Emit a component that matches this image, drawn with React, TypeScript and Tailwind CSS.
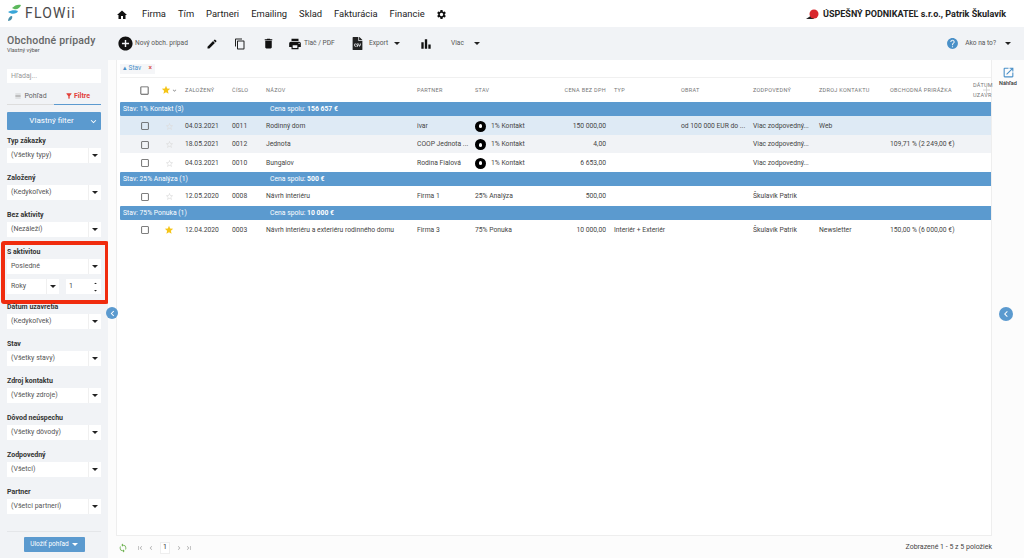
import React from "react";
import { MdHome, MdSettings, MdAddCircle, MdEdit, MdContentCopy, MdDelete, MdPrint, MdBarChart, MdHelp, MdStar, MdStarBorder, MdChevronLeft, MdSync, MdFirstPage, MdLastPage, MdNavigateBefore, MdNavigateNext, MdFilterAlt, MdViewHeadline, MdKeyboardArrowDown, MdArrowDropDown, MdArrowDropUp, MdOpenInNew, MdCheckBoxOutlineBlank } from "react-icons/md";
import { FaFileCsv } from "react-icons/fa";

const Caret = ({ className = "" }: { className?: string }) => (
  <span className={`inline-block w-0 h-0 border-x-[3px] border-x-transparent border-t-[3px] border-t-[#222] ${className}`} />
);

function Select({ text, className = "" }: { text: string; className?: string }) {
  return (
    <div className={`flex h-[15px] shrink-0 bg-white ${className}`}>
      <div className="flex-1 flex items-center pl-[4px] text-[7px] text-[#555] truncate">{text}</div>
      <div className="w-[13px] flex items-center justify-center border-l border-[#f0f0f0]"><Caret /></div>
    </div>
  );
}

function Field({ label, value, compact }: { label: string; value: string; compact?: boolean }) {
  return (
    <div className="flex flex-col shrink-0">
      <div className={`${compact ? "h-[10px]" : "h-[22px]"} flex items-end pb-[2px] text-[7px] leading-[9px] font-bold text-[#333]`}>{label}</div>
      <Select text={value} />
    </div>
  );
}

const cols = {
  check: "w-[25px] flex justify-center",
  star: "w-[28px] flex justify-center pr-[4px]",
  date: "w-[47px]",
  num: "w-[34px]",
  name: "w-[151px]",
  partner: "w-[58px]",
  stav: "w-[70px]",
  cena: "w-[61px] text-right",
  typ: "w-[75px] pl-[8px]",
  obrat: "w-[72px]",
  zodp: "w-[66px]",
  zdroj: "w-[71px]",
  prir: "w-[83px]",
  dat: "w-[18px]",
};

type R = { d: string; n: string; name: string; p: string; st: string; icon?: boolean; c: string; t?: string; o?: string; z: string; zk?: string; pr?: string; fav?: boolean; bg: string; h: string };

function Row({ r }: { r: R }) {
  return (
    <div className={`flex items-center text-[6.75px] text-[#444] pl-[12px] pt-[1px] ${r.h} ${r.bg}`}>
      <div className={cols.check}><MdCheckBoxOutlineBlank className="text-[10px] text-[#555]" /></div>
      <div className={cols.star}>
        {r.fav ? <MdStar className="text-[10px] text-[#f5c518]" /> : <MdStarBorder className="text-[9px] text-[#ddd]" />}
      </div>
      <div className={cols.date}>{r.d}</div>
      <div className={cols.num}>{r.n}</div>
      <div className={cols.name}>{r.name}</div>
      <div className={`${cols.partner} truncate pr-[2px]`}>{r.p}</div>
      <div className={`${cols.stav} flex items-center gap-[5px]`}>
        {r.icon && <span className="w-[11px] h-[11px] rounded-full bg-black flex items-center justify-center"><span className="w-[3px] h-[4px] rounded-sm bg-white" /></span>}
        <span>{r.st}</span>
      </div>
      <div className={cols.cena}>{r.c}</div>
      <div className={cols.typ}>{r.t}</div>
      <div className={`${cols.obrat} whitespace-nowrap`}>{r.o}</div>
      <div className={cols.zodp}>{r.z}</div>
      <div className={cols.zdroj}>{r.zk}</div>
      <div className={`${cols.prir} whitespace-nowrap`}>{r.pr}</div>
    </div>
  );
}

function Group({ a, b }: { a: string; b: string }) {
  return (
    <div className="h-[14px] flex items-center bg-[#5b9acf] text-white text-[6.8px] rounded-l-[1px] pl-[3px] pt-[1px]">
      <div className="w-[147px]">{a}</div>
      <div>Cena spolu: <b>{b}</b></div>
    </div>
  );
}

const Th = ({ className, children }: { className: string; children?: React.ReactNode }) => (
  <div className={`${className} text-[5.5px] tracking-[0.3px] text-[#777] whitespace-nowrap`}>{children}</div>
);

export default function App() {
  return (
    <div className="relative w-[1024px] h-[558px] flex flex-col bg-white overflow-hidden font-['Roboto',sans-serif]">
      <header className="h-[27px] flex items-center bg-white shrink-0 pt-[2px]">
        <div className="w-[116px] flex items-center pl-[7px] gap-[3px] -mt-[3px]">
          <svg width="15" height="18" viewBox="0 0 15 18">
            <path d="M5 4 C8 1 11 0 14 1 C13 4 10 6 7 5 Z" fill="#5cb85c" />
            <path d="M1 8 C4 6 9 6 11 7 C10 10 5 11 1 8 Z" fill="#3aa6d8" />
            <path d="M1 17 C1 14 3 12 5 12 C6 14 4 17 1 17 Z" fill="#4a8fa8" />
          </svg>
          <span className="text-[14px] leading-none tracking-[1.2px] text-[#4a4a4a]">FLOWii</span>
        </div>
        <MdHome className="text-[12px] text-[#111]" />
        <nav className="flex items-center text-[9.4px] text-[#222] ml-[14px] gap-[12px]">
          <span>Firma</span><span>Tím</span><span>Partneri</span><span>Emailing</span><span>Sklad</span><span>Fakturácia</span><span>Financie</span>
        </nav>
        <MdSettings className="text-[11px] text-[#111] ml-[11px]" />
        <div className="ml-auto flex items-center gap-[3px] pr-[18px]">
          <svg width="14" height="11" viewBox="0 0 14 11">
            <path d="M0 10 L6 6 L8 10 Z" fill="#222" />
            <circle cx="8" cy="5" r="4.5" fill="#d8262c" />
          </svg>
          <span className="text-[9px] font-bold text-[#222]">ÚSPEŠNÝ PODNIKATEĽ s.r.o., Patrik Škulavík</span>
        </div>
      </header>

      <div className="h-[33px] shrink-0 flex items-center bg-[#f1f3f6] text-[#555]">
        <div className="w-[117px] pl-[7px]">
          <div className="text-[10.5px] leading-[12px] font-medium tracking-[0.2px] text-[#666]">Obchodné prípady</div>
          <div className="text-[5.5px] leading-[6px] text-[#555]">Vlastný výber</div>
        </div>
        <MdAddCircle className="text-[17px] text-[#111]" />
        <span className="text-[6.6px] ml-[1px] w-[71px]">Nový obch. prípad</span>
        <MdEdit className="text-[12px] text-[#111]" />
        <MdContentCopy className="text-[12px] text-[#222] ml-[16px]" />
        <MdDelete className="text-[13px] text-[#111] ml-[16px]" />
        <MdPrint className="text-[14px] text-[#111] ml-[13px]" />
        <span className="text-[6.6px] ml-[2px] w-[47px]">Tlač / PDF</span>
        <FaFileCsv className="text-[13px] text-[#222]" />
        <span className="text-[6.6px] ml-[5px]">Export</span>
        <Caret className="ml-[6px]" />
        <MdBarChart className="text-[14px] text-[#111] ml-[19px]" />
        <span className="text-[6.6px] ml-[18px]">Viac</span>
        <Caret className="ml-[10px]" />
        <div className="ml-auto flex items-center pr-[13px]">
          <MdHelp className="text-[13px] text-[#4a90c8]" />
          <span className="text-[6.6px] ml-[6px]">Ako na to?</span>
          <Caret className="ml-[9px]" />
        </div>
      </div>

      <div className="flex-1 flex min-h-0">
        <aside className="w-[108px] shrink-0 bg-[#f1f3f6] px-[7px] flex flex-col">
          <div className="mt-[9px] h-[14px] shrink-0 bg-white flex items-center pl-[4px] text-[7px] text-[#999]">Hľadaj...</div>
          <div className="mt-[5px] h-[17px] shrink-0 flex text-[7px]">
            <div className="flex-1 flex items-center justify-center gap-[2px] text-[#666] border-b border-[#ddd]"><MdViewHeadline className="text-[8px] text-[#aaa]" />Pohľad</div>
            <div className="flex-1 flex items-center justify-center gap-[1px] font-bold text-[#e2403a] border-b border-[#5b9acf]"><MdFilterAlt className="text-[8px]" />Filtre</div>
          </div>
          <div className="mt-[7px] h-[18px] shrink-0 bg-[#5b9acf] text-white text-[8px] flex items-center rounded-[1px]">
            <span className="flex-1 text-center pl-[8px]">Vlastný filter</span>
            <MdKeyboardArrowDown className="text-[11px] mr-[2px]" />
          </div>
          <div className="-mt-[4px]">
            <Field label="Typ zákazky" value="(Všetky typy)" />
            <Field label="Založený" value="(Kedykoľvek)" />
            <Field label="Bez aktivity" value="(Nezáleží)" />
          </div>
          <div className="-ml-[6px] -mr-[8px] h-[63px] shrink-0 mt-[4px] border-[4px] border-[#f02c0e] rounded-[3px] pl-[2px] pr-[4px]">
            <div className="h-[14px] pt-[3px] text-[7px] leading-[9px] font-bold text-[#333]">S aktivitou</div>
            <Select text="Posledné" />
            <div className="flex justify-between mt-[5px]">
              <Select text="Roky" className="w-[52px]" />
              <div className="w-[35px] h-[15px] bg-white flex items-center justify-between pl-[3px] pr-[2px] text-[7px] text-[#444]">
                <span>1</span>
                <span className="flex flex-col gap-[2px]"><MdArrowDropUp className="text-[7px] -my-[1px] text-[#222]" /><MdArrowDropDown className="text-[7px] -my-[1px] text-[#222]" /></span>
              </div>
            </div>
          </div>
          <Field compact label="Dátum uzavretia" value="(Kedykoľvek)" />
          <Field label="Stav" value="(Všetky stavy)" />
          <Field label="Zdroj kontaktu" value="(Všetky zdroje)" />
          <Field label="Dôvod neúspechu" value="(Všetky dôvody)" />
          <Field label="Zodpovedný" value="(Všetci)" />
          <Field label="Partner" value="(Všetci partneri)" />
          <div className="mt-[17px] border-t border-[#e4e6e9] pt-[5px] flex justify-center shrink-0">
            <div className="h-[15px] w-[61px] bg-[#5b9acf] text-white text-[6.5px] flex items-center justify-center gap-[3px] rounded-[1px]">
              Uložiť pohľad <Caret className="border-t-white" />
            </div>
          </div>
        </aside>

        <main className="flex-1 flex flex-col min-w-0 bg-[#fcfcfc]">
          <div className="flex-1 flex min-h-0">
            <div className="ml-[8px] w-[876px] border border-[#eeeeee] border-t-0 bg-white flex flex-col pl-[3px]">
              <div className="h-[17px] flex items-center shrink-0 pt-[1px]">
                <div className="h-[10px] px-[3px] w-[35px] bg-[#f5f6f8] text-[6.5px] text-[#4a90c8] flex items-center justify-between">
                  <span>▴ Stav</span><span className="text-[#d9534f] font-bold">×</span>
                </div>
              </div>
              <div className="relative h-[25px] flex items-center border-t border-[#f0f0f0] pl-[12px] shrink-0">
                <div className={cols.check}><MdCheckBoxOutlineBlank className="text-[11px] text-[#555]" /></div>
                <div className={`${cols.star} items-center`}><MdStar className="text-[10px] text-[#f5c518]" /><MdKeyboardArrowDown className="text-[7px] text-[#888]" /></div>
                <Th className={cols.date}>ZALOŽENÝ</Th>
                <Th className={cols.num}>ČÍSLO</Th>
                <Th className={cols.name}>NÁZOV</Th>
                <Th className={cols.partner}>PARTNER</Th>
                <Th className={cols.stav}>STAV</Th>
                <Th className={cols.cena}>CENA BEZ DPH</Th>
                <Th className={cols.typ}>TYP</Th>
                <Th className={cols.obrat}>OBRAT</Th>
                <Th className={cols.zodp}>ZODPOVEDNÝ</Th>
                <Th className={cols.zdroj}>ZDROJ KONTAKTU</Th>
                <Th className={cols.prir}>OBCHODNÁ PRIRÁŽKA</Th>
                <Th className={`${cols.dat} leading-[10px]`}>DÁTUM<br />UZAVR</Th>
                <svg className="absolute right-[1px] top-[8px]" width="7" height="8" viewBox="0 0 7 8"><path d="M3.5 0V8M0 4H7" stroke="#ccc" strokeWidth="0.8" /></svg>
              </div>
              <Group a="Stav: 1% Kontakt (3)" b="156 657 €" />
              <Row r={{ d: "04.03.2021", n: "0011", name: "Rodinný dom", p: "ivar", st: "1% Kontakt", icon: true, c: "150 000,00", o: "od 100 000 EUR do ...", z: "Viac zodpovedný...", zk: "Web", bg: "bg-[#deeaf5]", h: "h-[19px]" }} />
              <Row r={{ d: "18.05.2021", n: "0012", name: "Jednota", p: "COOP Jednota ...", st: "1% Kontakt", icon: true, c: "4,00", z: "Viac zodpovedný...", pr: "109,71 % (2 249,00 €)", bg: "bg-[#f1f3f6]", h: "h-[18px]" }} />
              <Row r={{ d: "04.03.2021", n: "0010", name: "Bungalov", p: "Rodina Fialová", st: "1% Kontakt", icon: true, c: "6 653,00", z: "Viac zodpovedný...", bg: "bg-white", h: "h-[19px]" }} />
              <Group a="Stav: 25% Analýza (1)" b="500 €" />
              <Row r={{ d: "12.05.2020", n: "0008", name: "Návrh interiéru", p: "Firma 1", st: "25% Analýza", c: "500,00", z: "Škulavík Patrik", bg: "bg-white", h: "h-[20px]" }} />
              <Group a="Stav: 75% Ponuka (1)" b="10 000 €" />
              <Row r={{ d: "12.04.2020", n: "0003", name: "Návrh interiéru a exteriéru rodinného domu", p: "Firma 3", st: "75% Ponuka", c: "10 000,00", t: "Interiér + Exteriér", z: "Škulavík Patrik", zk: "Newsletter", pr: "150,00 % (6 000,00 €)", fav: true, bg: "bg-white", h: "h-[19px]" }} />
            </div>
            <div className="flex-1 flex flex-col items-center pt-[6px]">
              <MdOpenInNew className="text-[13px] text-[#4a90c8]" />
              <span className="text-[5.5px] font-medium text-[#333] leading-[7px] mt-[1px]">Náhľad</span>
            </div>
          </div>
          <div className="h-[22px] shrink-0 flex items-center pl-[10px] pr-[32px] text-[#aaa] pt-[1px]">
            <MdSync className="text-[10px] text-[#6ab04c]" />
            <MdFirstPage className="text-[8px] ml-[8px]" />
            <MdNavigateBefore className="text-[8px] ml-[3px]" />
            <span className="ml-[5px] w-[10px] h-[12px] bg-white border border-[#eee] text-[7px] text-[#333] flex items-center justify-center">1</span>
            <MdNavigateNext className="text-[8px] ml-[5px]" />
            <MdLastPage className="text-[8px] ml-[2px]" />
            <span className="ml-auto text-[7px] text-[#444]">Zobrazené 1 - 5 z 5 položiek</span>
          </div>
        </main>
      </div>

      <span className="absolute left-[106px] top-[307px] w-[12px] h-[12px] rounded-full bg-[#5b9acf] flex items-center justify-center text-white"><MdChevronLeft className="text-[11px]" /></span>
      <span className="absolute left-[999px] top-[307px] w-[14px] h-[14px] rounded-full bg-[#5b9acf] flex items-center justify-center text-white"><MdChevronLeft className="text-[12px]" /></span>
    </div>
  );
}
